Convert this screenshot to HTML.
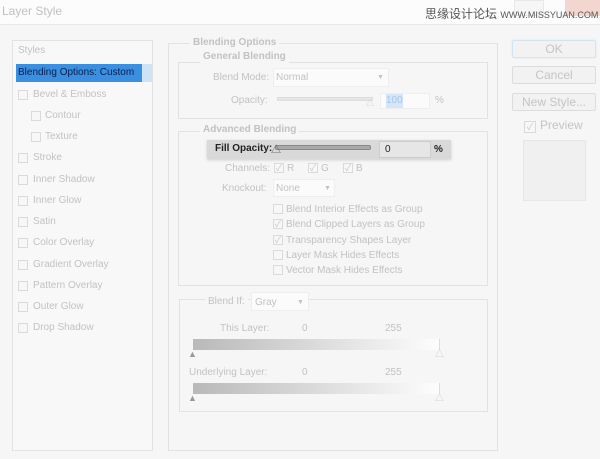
<!DOCTYPE html>
<html><head><style>
*{margin:0;padding:0;box-sizing:border-box}
body{width:600px;height:459px;background:#f6f6f6;font-family:"Liberation Sans","Noto Sans CJK SC",sans-serif;font-size:10px;line-height:14px;color:#c2c2c2;position:relative;overflow:hidden}
.a{position:absolute;white-space:nowrap}
.box{position:absolute;border:1px solid #e2e2e2}
.cb{position:absolute;width:10px;height:10px;border:1px solid #dadada;background:#f7f7f7;font-size:9px;line-height:8px;text-align:center;color:#c8c8c8}
.btn{position:absolute;left:512px;width:84px;height:18px;border:1px solid #dcdcdc;border-radius:2px;background:#f2f2f2;text-align:center;line-height:16px;font-size:12px;color:#c4c4c4}
.field{position:absolute;background:#fbfbfb;border:1px solid #eee}
.b{font-weight:bold;color:#c2c2c2}
</style></head><body>
<div class="a" style="left:0;top:0;width:600px;height:25px;background:#fcfcfc;border-bottom:1px solid #e6e6e6"></div>
<div class="a" style="left:2px;top:4px;font-size:12px;color:#c0c0c0">Layer Style</div>
<div class="a" style="left:514px;top:0;width:30px;height:16px;border:1px solid #e8e8e8;background:#f6f6f6"></div>
<div class="a" style="left:565px;top:0;width:35px;height:16px;background:#f4d6d0"></div>
<div class="a" style="left:425px;top:7px;font-size:12px;color:#555">思缘设计论坛 <span style="font-size:9px">WWW.MISSYUAN.COM</span></div>

<div class="box" style="left:12px;top:40px;width:141px;height:411px;background:#f8f8f8"></div>
<div class="a" style="left:18px;top:44px">Styles</div>
<div class="a" style="left:16px;top:64px;width:126px;height:18px;background:#3a8fe0"></div>
<div class="a" style="left:142px;top:64px;width:10px;height:18px;background:#cfe3f7"></div>
<div class="a" style="left:18px;top:66px;color:#0a1f4d">Blending Options: Custom</div>
<div class="cb" style="left:18px;top:90px"></div><div class="a" style="left:33px;top:88px">Bevel &amp; Emboss</div>
<div class="cb" style="left:31px;top:111px"></div><div class="a" style="left:45px;top:109px">Contour</div>
<div class="cb" style="left:31px;top:132px"></div><div class="a" style="left:45px;top:130px">Texture</div>
<div class="cb" style="left:18px;top:153px"></div><div class="a" style="left:33px;top:151px">Stroke</div>
<div class="cb" style="left:18px;top:175px"></div><div class="a" style="left:33px;top:173px">Inner Shadow</div>
<div class="cb" style="left:18px;top:196px"></div><div class="a" style="left:33px;top:194px">Inner Glow</div>
<div class="cb" style="left:18px;top:217px"></div><div class="a" style="left:33px;top:215px">Satin</div>
<div class="cb" style="left:18px;top:238px"></div><div class="a" style="left:33px;top:236px">Color Overlay</div>
<div class="cb" style="left:18px;top:260px"></div><div class="a" style="left:33px;top:258px">Gradient Overlay</div>
<div class="cb" style="left:18px;top:281px"></div><div class="a" style="left:33px;top:279px">Pattern Overlay</div>
<div class="cb" style="left:18px;top:302px"></div><div class="a" style="left:33px;top:300px">Outer Glow</div>
<div class="cb" style="left:18px;top:323px"></div><div class="a" style="left:33px;top:321px">Drop Shadow</div>

<div class="box" style="left:168px;top:43px;width:330px;height:408px"></div>
<div class="a b" style="left:190px;top:36px;background:#f6f6f6;padding:0 3px">Blending Options</div>
<div class="box" style="left:178px;top:62px;width:310px;height:57px"></div>
<div class="a b" style="left:200px;top:50px;background:#f6f6f6;padding:0 3px">General Blending</div>
<div class="a" style="left:213px;top:71px">Blend Mode:</div>
<div class="field" style="left:273px;top:68px;width:116px;height:19px"></div>
<div class="a" style="left:276px;top:71px">Normal</div>
<div class="a" style="left:377px;top:71px;font-size:7px">▼</div>
<div class="a" style="left:231px;top:94px">Opacity:</div>
<div class="a" style="left:277px;top:97px;width:96px;height:4px;background:#e6e6e6;border:1px solid #ddd"></div>
<div class="a" style="left:366px;top:97px;font-size:8px;color:#ccc">△</div>
<div class="field" style="left:380px;top:93px;width:50px;height:16px"></div>
<div class="a" style="left:386px;top:94px;background:#d4e6f8;color:#a8c6ea">100</div>
<div class="a" style="left:435px;top:94px">%</div>

<div class="box" style="left:178px;top:131px;width:310px;height:155px"></div>
<div class="a b" style="left:200px;top:123px;background:#f6f6f6;padding:0 3px">Advanced Blending</div>
<div class="a" style="left:207px;top:140px;width:244px;height:19px;background:#d9d9d9;box-shadow:0 1px 3px #ccc"></div>
<div class="a" style="left:215px;top:142px;font-weight:bold;color:#222">Fill Opacity:</div>
<div class="a" style="left:275px;top:145px;width:96px;height:5px;background:#aaa;border:1px solid #888;border-radius:2px"></div>
<div class="a" style="left:271px;top:144px;font-size:10px;color:#555">△</div>
<div class="a" style="left:379px;top:141px;width:52px;height:17px;background:#e6e6e6;border:1px solid #ccc"></div>
<div class="a" style="left:385px;top:143px;color:#222">0</div>
<div class="a" style="left:434px;top:143px;color:#222;font-weight:bold">%</div>
<div class="a" style="left:225px;top:162px">Channels:</div>
<div class="cb" style="left:274px;top:163px">✓</div><div class="a" style="left:287px;top:162px">R</div>
<div class="cb" style="left:308px;top:163px">✓</div><div class="a" style="left:321px;top:162px">G</div>
<div class="cb" style="left:343px;top:163px">✓</div><div class="a" style="left:356px;top:162px">B</div>
<div class="a" style="left:222px;top:182px">Knockout:</div>
<div class="field" style="left:273px;top:179px;width:62px;height:18px"></div>
<div class="a" style="left:276px;top:182px">None</div>
<div class="a" style="left:324px;top:182px;font-size:7px">▼</div>
<div class="cb" style="left:273px;top:204px"></div><div class="a" style="left:286px;top:203px">Blend Interior Effects as Group</div>
<div class="cb" style="left:273px;top:219px">✓</div><div class="a" style="left:286px;top:218px">Blend Clipped Layers as Group</div>
<div class="cb" style="left:273px;top:235px">✓</div><div class="a" style="left:286px;top:234px">Transparency Shapes Layer</div>
<div class="cb" style="left:273px;top:250px"></div><div class="a" style="left:286px;top:249px">Layer Mask Hides Effects</div>
<div class="cb" style="left:273px;top:265px"></div><div class="a" style="left:286px;top:264px">Vector Mask Hides Effects</div>

<div class="box" style="left:179px;top:299px;width:309px;height:113px"></div>
<div class="a" style="left:205px;top:295px;background:#f6f6f6;padding:0 3px">Blend If:</div>
<div class="field" style="left:251px;top:292px;width:58px;height:19px"></div>
<div class="a" style="left:255px;top:296px">Gray</div>
<div class="a" style="left:297px;top:296px;font-size:7px">▼</div>
<div class="a" style="left:220px;top:322px">This Layer:</div>
<div class="a" style="left:302px;top:322px">0</div>
<div class="a" style="left:385px;top:322px">255</div>
<div class="a" style="left:193px;top:339px;width:247px;height:11px;background:linear-gradient(90deg,#b9b9b9,#fdfdfd);border-right:1px solid #ddd"></div>
<div class="a" style="left:188px;top:347px;font-size:9px;color:#999">▲</div>
<div class="a" style="left:435px;top:347px;font-size:9px;color:#ccc">△</div>
<div class="a" style="left:189px;top:366px">Underlying Layer:</div>
<div class="a" style="left:302px;top:366px">0</div>
<div class="a" style="left:385px;top:366px">255</div>
<div class="a" style="left:193px;top:383px;width:247px;height:11px;background:linear-gradient(90deg,#b9b9b9,#fdfdfd);border-right:1px solid #ddd"></div>
<div class="a" style="left:188px;top:391px;font-size:9px;color:#999">▲</div>
<div class="a" style="left:435px;top:391px;font-size:9px;color:#ccc">△</div>

<div class="btn" style="top:40px;border-color:#cfe6f2;box-shadow:0 0 2px #d8ecf6">OK</div>
<div class="btn" style="top:66px">Cancel</div>
<div class="btn" style="top:93px">New Style...</div>
<div class="cb" style="left:524px;top:121px;width:12px;height:12px;line-height:10px">✓</div>
<div class="a" style="left:540px;top:118px;font-size:12px;color:#c4c4c4">Preview</div>
<div class="a" style="left:523px;top:140px;width:63px;height:61px;background:#f0f0f0;border:1px solid #e6e6e6"></div>
</body></html>
